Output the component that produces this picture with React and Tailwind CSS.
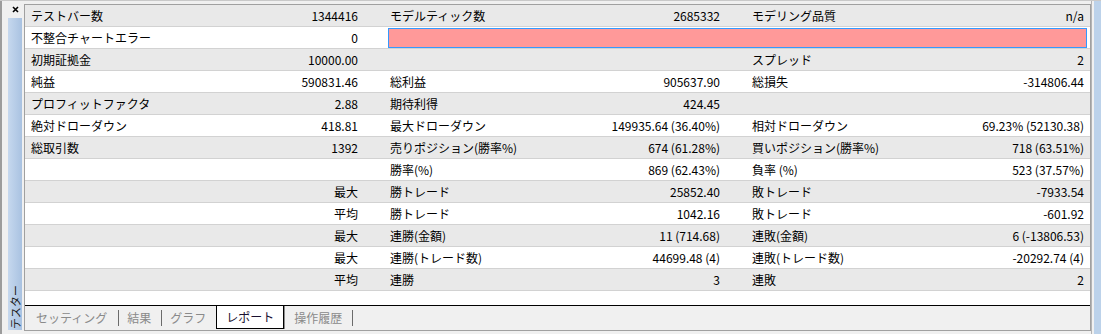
import React from "react";

const rows = [
  [["テストバー数", "1344416"], ["モデルティック数", "2685332"], ["モデリング品質", "n/a"]],
  [["不整合チャートエラー", "0"], "error"],
  [["初期証拠金", "10000.00"], ["", ""], ["スプレッド", "2"]],
  [["純益", "590831.46"], ["総利益", "905637.90"], ["総損失", "-314806.44"]],
  [["プロフィットファクタ", "2.88"], ["期待利得", "424.45"], ["", ""]],
  [["絶対ドローダウン", "418.81"], ["最大ドローダウン", "149935.64 (36.40%)"], ["相対ドローダウン", "69.23% (52130.38)"]],
  [["総取引数", "1392"], ["売りポジション(勝率%)", "674 (61.28%)"], ["買いポジション(勝率%)", "718 (63.51%)"]],
  [["", ""], ["勝率(%)", "869 (62.43%)"], ["負率 (%)", "523 (37.57%)"]],
  [["", "最大"], ["勝トレード", "25852.40"], ["敗トレード", "-7933.54"]],
  [["", "平均"], ["勝トレード", "1042.16"], ["敗トレード", "-601.92"]],
  [["", "最大"], ["連勝(金額)", "11 (714.68)"], ["連敗(金額)", "6 (-13806.53)"]],
  [["", "最大"], ["連勝(トレード数)", "44699.48 (4)"], ["連敗(トレード数)", "-20292.74 (4)"]],
  [["", "平均"], ["連勝", "3"], ["連敗", "2"]],
];

const Cell = ({ pair }) => (
  <div className="flex items-center justify-between whitespace-nowrap">
    <span>{pair[0]}</span>
    <span>{pair[1]}</span>
  </div>
);

const Sep = ({ className }) => <span className={`h-[16px] w-px bg-[#6b6b6b] ${className}`} />;

export default function App() {
  return (
    <div
      className="flex h-[334px] w-[1101px] overflow-hidden border-t border-[#c9c9c9] bg-[#f0f0f0] text-[12px] leading-[14px] text-black"
      style={{ fontFamily: '"Noto Sans CJK JP", "Noto Sans", sans-serif' }}
    >
      {/* left docking bar */}
      <div className="flex w-[24px] shrink-0 flex-col border-l-2 border-[#9c9c9c] pl-[6px] pr-[2px]">
        <div className="flex h-[17px] items-center justify-center">
          <svg width="7" height="7" viewBox="0 0 7 7">
            <path d="M1 1L6 6M6 1L1 6" stroke="#000" strokeWidth="1.6" />
          </svg>
        </div>
        <div className="mb-[4px] flex flex-1 flex-col items-center justify-end bg-gradient-to-r from-[#c6d8ee] to-[#a9c2e1] pb-[1px]">
          <span className="rotate-180 text-[11px] leading-[13px] text-[#1a1a1a] [text-orientation:sideways] [writing-mode:vertical-rl]">
            テスター
          </span>
        </div>
      </div>

      {/* report panel */}
      <div className="mb-[3px] mt-[3px] flex w-[1067px] shrink-0 flex-col border border-[#a0a0a0] bg-white">
        <div>
          {rows.map((row, i) => (
            <div
              key={i}
              className={`grid h-[22px] grid-cols-[327px_330px_332px] gap-x-[32px] border-b border-[#d2d2d2] pl-[6px] ${
                i % 2 === 0 ? "bg-[#e9e9e9]" : "bg-white"
              }`}
            >
              <Cell pair={row[0]} />
              {row[1] === "error" ? (
                <div className="col-span-2 -ml-[2px] -mr-[3px] h-[20px] self-end border border-[#3399ff] bg-[#ff9999]" />
              ) : (
                <>
                  <Cell pair={row[1]} />
                  <Cell pair={row[2]} />
                </>
              )}
            </div>
          ))}
        </div>
        <div className="flex-1" />

        {/* tabs */}
        <div className="flex h-[25px] items-center border-t border-black bg-[#f0f0f0] pb-[1px] text-[#8a8a8a]">
          <span className="ml-[11px]">セッティング</span>
          <Sep className="ml-[11px]" />
          <span className="ml-[8px]">結果</span>
          <Sep className="ml-[10px]" />
          <span className="ml-[8px]">グラフ</span>
          <div className="ml-[10px] flex h-[23px] w-[68px] items-center justify-center self-start border-x border-b border-black bg-white text-[#1a1030] shadow-[1px_0_0_#8c8c8c]">
            レポート
          </div>
          <span className="ml-[10px]">操作履歴</span>
          <Sep className="ml-[10px]" />
        </div>
      </div>

      {/* right edge */}
      <div className="w-[10px] shrink-0 border-l border-[#b4b4b4] pl-[2px]">
        <div className="h-full bg-[#bcd2ea]" />
      </div>
    </div>
  );
}
